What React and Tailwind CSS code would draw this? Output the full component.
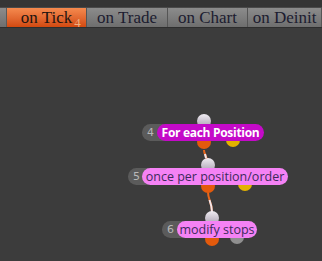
import React from "react";

const tabs = [
  { label: "on Tick", active: true, badge: "4", w: "w-[80px]" },
  { label: "on Trade", w: "w-[81px]" },
  { label: "on Chart", w: "w-[80px]" },
  { label: "on Deinit", w: "w-[74px]" },
];

// one diagram node on the canvas
const Node = ({ n, label, left, top, pillLeft, pillW, inCx, outs, outGap, variant }) => {
  const pill =
    variant === "loop"
      ? "bg-[#c40ac8] text-white font-bold text-[12px] tracking-[-0.3px]"
      : "bg-[#f582f5] text-[#3d2a5c] text-[12.5px]";
  return (
    <div className="absolute" style={{ left, top }}>
      <div
        className="absolute w-[14px] h-[14px] rounded-full bg-linear-to-b from-[#f0ecf2] to-[#a9a0b0]"
        style={{ left: inCx - 7, top: -10 }}
      />
      {outs.map((o, i) => (
        <div
          key={i}
          className={`absolute w-[14px] h-[14px] rounded-full ${o}`}
          style={{ left: (i === 0 ? inCx : inCx + outGap) - 7, top: i === 0 ? 11 : 9 }}
        />
      ))}
      <div className="relative h-[17px] w-[40px] rounded-full bg-[#5b5b5b] text-[#b8b8b8] text-[11px] leading-[17px] pl-[5px] font-['DejaVu_Sans',sans-serif]">
        {n}
      </div>
      <div
        className={`absolute top-0 h-[17px] rounded-full leading-[17px] text-center whitespace-nowrap font-['Open_Sans',sans-serif] ${pill}`}
        style={{ left: pillLeft, width: pillW }}
      >
        {label}
      </div>
    </div>
  );
};

export default function App() {
  return (
    <div className="w-[322px] h-[261px] bg-[#3c3c3c] overflow-hidden flex flex-col">
      <div className="h-[8px] bg-[#353535] border-b border-[#4a4a4a]" />
      <div className="h-[20px] flex bg-linear-to-b from-[#8c8c8c] to-[#6e6e6e] border-b border-[#2e2e2e] font-['Liberation_Serif',serif] text-[17px]">
        <div className="w-[7px] border-r border-[#5a5a5a]" />
        {tabs.map((t) => (
          <div
            key={t.label}
            className={`${t.w} shrink-0 flex items-center justify-center border-r border-[#555] leading-none ${
              t.active
                ? "bg-linear-to-b from-[#f58a4e] to-[#d2490e] text-[#1e1410]"
                : "text-[#1c1c30]"
            }`}
          >
            <span className="relative">
              {t.label}
              {t.badge && (
                <span className="absolute left-full ml-[2px] top-[7px] text-[13px] text-[#f0b080]">
                  {t.badge}
                </span>
              )}
            </span>
          </div>
        ))}
      </div>

      <div className="relative flex-1">
        <svg className="absolute inset-0" width="322" height="233" fill="none">
          <path d="M204 122 C204 127 207 128 207 133" stroke="#e8661c" strokeWidth="2" />
          <path d="M205 126 L206 130" stroke="#f3e6ea" strokeWidth="2" />
          <path d="M208 164 C208 172 212 174 212 184" stroke="#e8661c" strokeWidth="2" />
          <path d="M209.5 172 C211 176 212 179 212 184" stroke="#f3e6ea" strokeWidth="2" />
        </svg>
        <Node
          n="4"
          label="For each Position"
          left={142}
          top={96}
          pillLeft={15}
          pillW={107}
          inCx={62}
          outGap={29}
          outs={["bg-[#e35a0c]", "bg-[#e3b200]"]}
          variant="loop"
        />
        <Node
          n="5"
          label="once per position/order"
          left={128}
          top={140}
          pillLeft={14}
          pillW={146}
          inCx={80}
          outGap={37}
          outs={["bg-[#e35a0c]", "bg-[#e3b200]"]}
        />
        <Node
          n="6"
          label="modify stops"
          left={162}
          top={193}
          pillLeft={15}
          pillW={80}
          inCx={50}
          outGap={25}
          outs={["bg-[#e35a0c]", "bg-[#8f8f8f]"]}
        />
      </div>
    </div>
  );
}
